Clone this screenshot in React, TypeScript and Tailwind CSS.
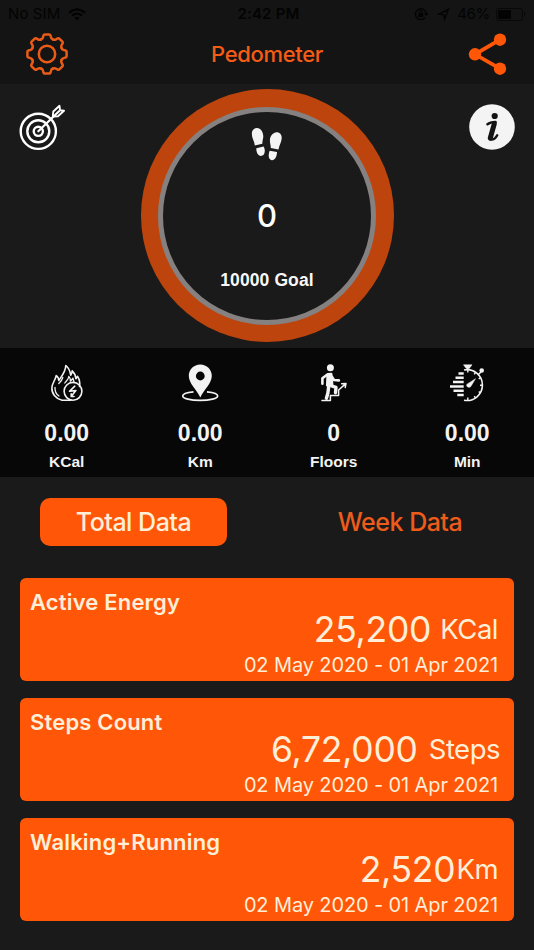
const stats = [
  { label: "KCal", value: "0.00", Icon: FlameIcon },
  { label: "Km", value: "0.00", Icon: PinIcon },
  { label: "Floors", value: "0", Icon: StairsIcon },
  { label: "Min", value: "0.00", Icon: StopwatchIcon },
];

const totals = [
  { title: "Active Energy", value: "25,200", unit: "KCal", valueClass: "pr-[16px] gap-[9px]" },
  { title: "Steps Count", value: "6,72,000", unit: "Steps", valueClass: "pr-[14px] gap-[11px]" },
  { title: "Walking+Running", value: "2,520", unit: "Km", valueClass: "pr-[16px] gap-[1px]" },
];

const range = "02 May 2020 - 01 Apr 2021";

function GearIcon() {
  return (
    <svg width="44" height="44" viewBox="-22 -22 44 44" fill="none" stroke="#ea5b17" strokeWidth="2.5" strokeLinecap="round" strokeLinejoin="round">
      <circle r="8.2" />
      {[0, 45, 90, 135, 180, 225, 270, 315].map((angle) => (
        <path
          key={angle}
          transform={`rotate(${angle})`}
          d="M-6 -14.5C-4.4 -15.1 -4.1 -15.7 -3.9 -17L-3.5 -18.6Q-3.2 -19.6 -2.2 -19.6H2.2Q3.2 -19.6 3.5 -18.6L3.9 -17C4.1 -15.7 4.4 -15.1 6 -14.5"
        />
      ))}
    </svg>
  );
}

function ShareIcon() {
  return (
    <svg width="40" height="44" viewBox="0 0 40 44" fill="#ff5607" stroke="#ff5607">
      <path d="M32 7.7 7 22.3 32 36.7" fill="none" strokeWidth="3.8" />
      <circle cx="7" cy="22.3" r="6.2" stroke="none" />
      <circle cx="32" cy="7.7" r="6.2" stroke="none" />
      <circle cx="32" cy="36.7" r="6.2" stroke="none" />
    </svg>
  );
}

function TargetIcon() {
  return (
    <svg width="48" height="48" viewBox="0 0 48 48" fill="none" stroke="#fff" strokeWidth="2.4" strokeLinejoin="round" strokeLinecap="round">
      <circle cx="19.3" cy="28.3" r="17.6" />
      <circle cx="19.3" cy="28.3" r="11" />
      <circle cx="19.3" cy="28.3" r="4.6" />
      <path d="M19.3 28.3 40 8.2" strokeWidth="2.2" />
      <path d="M33.8 13.5 34.3 8.5 40.5 2.8 41 7.2 45 7.8 39 13.3Z" strokeWidth="1.9" />
    </svg>
  );
}

function InfoIcon() {
  return (
    <svg width="46" height="46" viewBox="0 0 46 46" fill="none" stroke="#141414" strokeLinecap="round" strokeLinejoin="round">
      <circle cx="23" cy="23" r="22.8" fill="#f4f4f4" stroke="none" />
      <circle cx="25.7" cy="12" r="3.1" fill="#141414" stroke="none" />
      <path d="M18.5 20.2C20.5 18.7 22.8 18.2 26.5 18" strokeWidth="2.6" />
      <path d="M25.3 19.8 21.3 34" strokeWidth="5" />
      <path d="M21 35.4C24 36 26.8 34 28.2 31.2" strokeWidth="2.4" />
    </svg>
  );
}

function WifiIcon() {
  return (
    <svg width="18" height="13" viewBox="0 0 18 13" fill="none" stroke="#030303" strokeWidth="2.2">
      <path d="M1 4.6Q9 -2 17 4.6" />
      <path d="M4 7.7Q9 3.6 14 7.7" />
      <path d="M9 12.4 6.4 9.7Q9 7.7 11.6 9.7Z" fill="#030303" stroke="none" />
    </svg>
  );
}

function StatusIcons() {
  return (
    <svg width="40" height="14" viewBox="0 0 40 14" fill="none" stroke="#030303" strokeWidth="1.4">
      <path d="M11 10.6A5.4 5.4 0 1 1 12.2 7" />
      <path d="m10.4 6.5 1.9 2.2 1.9-2.2Z" fill="#030303" strokeWidth="0.5" />
      <rect x="4.4" y="6.2" width="4.8" height="3.8" fill="#030303" stroke="none" />
      <path d="M5.4 6.5V5a1.4 1.4 0 0 1 2.8 0v1.5" strokeWidth="1" />
      <path d="M25 7.2 34.5 2.3 30.5 12 29.9 7.8Z" />
    </svg>
  );
}

function Footprints() {
  return (
    <svg width="32" height="34" viewBox="0 0 32 34" fill="#f4f4f4">
      <path d="M6 1C9.6.9 12.4 5 12.3 9.6 12.2 12 11.4 13.8 11.3 16.7L3.8 18.5C3.5 14.5.8 11.3.8 6.8.8 3.4 3 1.1 6 1Z" />
      <path d="M5.3 21.3 12.7 19.4C14.4 23 14.3 27.5 10.8 28.8 7.5 29.7 5.2 26 5.3 21.3Z" />
      <path d="M26.3 5.2C29.3 5.6 31 8.3 30.7 11.6 30.3 16 27.9 19 27.5 22.6L19.8 21.1C19.9 18.4 18.8 16 18.9 13 19.1 8.6 22.6 4.7 26.3 5.2Z" />
      <path d="M18.7 23.8 26 25.1C26 29.5 23.8 33.4 20.8 33.2 17.3 32.6 17 28 18.7 23.8Z" />
    </svg>
  );
}

function FlameIcon() {
  return (
    <svg width="40" height="40" viewBox="0 0 40 40" fill="none" stroke="#f3f3f3" strokeWidth="1.6" strokeLinecap="round" strokeLinejoin="round">
      <path d="M24 37.3H15C8.5 35.5 4.5 30.5 4.9 24.5 5.2 20.2 8 17.8 9.2 12.6 11 13.8 11.8 15.6 11.8 17.5 14.5 13.5 18.8 8.5 18.8 2.5 21.8 5 23.2 8 23.7 12.2 24.7 11 25.2 9.5 25.2 7.8 28 10.5 28.8 13.2 28.9 15.7L30.6 13.3C33 17.2 33.2 20 32.5 23.5" />
      <path d="M8 24.5C7.8 28.2 9.3 31.3 12 33M11.8 20.5C14 18.5 15.3 16.5 15.8 14.5M17.8 20C19.5 17.5 21.5 16.5 21.8 13.5 23.3 14.8 23.5 16.5 23.4 18.2L26 15.3 27 19" strokeWidth="1.3" />
      <circle cx="26" cy="28.3" r="8.9" />
      <path d="M27.8 23.2 22.5 28.3 28.9 27.6 24.3 33.3M24.2 30.8V33.5H27" />
    </svg>
  );
}

function PinIcon() {
  return (
    <svg width="40" height="40" viewBox="0 0 40 40">
      <path d="M13.5 28.9C7.5 29.5 2.7 31 2.7 33 2.7 35.5 10.5 37.4 20.2 37.4S37.7 35.5 37.7 33C37.7 31 33 29.5 27 28.9" fill="none" stroke="#f3f3f3" strokeWidth="1.6" />
      <path fillRule="evenodd" d="M20.3 1.5C13.8 1.5 8.8 6.5 8.8 12.8 8.8 20.5 16.5 26.5 20.3 34.5 24.1 26.5 31.8 20.5 31.8 12.8 31.8 6.5 26.8 1.5 20.3 1.5ZM20.3 8.6A4.4 4.4 0 1 1 20.3 17.4 4.4 4.4 0 0 1 20.3 8.6Z" fill="#f3f3f3" />
    </svg>
  );
}

function StairsIcon() {
  return (
    <svg width="40" height="40" viewBox="0 0 40 40" fill="none" stroke="#f3f3f3" strokeLinecap="round" strokeLinejoin="round">
      <circle cx="16.4" cy="4.8" r="3.5" fill="#f3f3f3" stroke="none" />
      <path d="M13.7 11.3 17.2 11.1 18.2 22 13.2 22.5Z" fill="#f3f3f3" strokeWidth="2.5" />
      <path d="M12.7 12 8.4 15.2V20.7M17.7 13.5 20 17 24.9 17.4" strokeWidth="2.6" />
      <path d="M14.7 23.5 13.9 30 12.4 35.3M16.2 22.5 22 24.3 21.5 29.7" strokeWidth="3.4" />
      <path d="M8 37.5H16.4V32.4H24.6V27L31.2 21.1M27.7 20.8 32 20.4 31.2 24.5" strokeWidth="1.5" />
    </svg>
  );
}

function StopwatchIcon() {
  return (
    <svg width="40" height="40" viewBox="0 0 40 40" fill="none" stroke="#f3f3f3">
      <path d="M17 7A15.4 15.4 0 1 1 17 37.2" strokeWidth="1.6" />
      <path d="M16.5 1.8H25L22.3 5.5H19.2Z" fill="#f3f3f3" strokeWidth="0.5" />
      <path d="M20.8 5V9.5M20.8 37V34.5M35.5 22.3H33M28.5 9.3 27.3 11.3M33.7 14.7 31.7 15.9M33.7 29.9 31.7 28.7M28.5 35.2 27.3 33.2" strokeWidth="1.4" />
      <circle cx="34.7" cy="7.5" r="2.3" fill="#f3f3f3" stroke="none" />
      <path d="M34 9 30.8 12" strokeWidth="1.5" />
      <path d="M28.5 15.7 23.8 23.5C22 25.5 18.5 23.5 20 21.2Z" fill="#f3f3f3" strokeWidth="0.5" />
      <path d="M11.5 10.5H16.7M8.5 14.8H16.7M6 19.1H16.7M3 23.4H16.7M6.5 27.7H16.7M10.3 32H16.7" strokeWidth="2.5" />
    </svg>
  );
}

export default function App() {
  return (
    <div className="flex h-[950px] w-[534px] flex-col overflow-hidden bg-[#1a1a1a] font-['Inter',sans-serif]">
      <header className="h-[84px] bg-[#141414]">
        <div className="grid h-[28px] grid-cols-3 items-center pr-[9px] pl-[8px] text-[15px] text-[#030303]">
          <div className="flex items-center gap-[8px]">
            <span className="tracking-[0.1px]">No SIM</span>
            <WifiIcon />
          </div>
          <span className="pl-[4px] text-center font-semibold tracking-[0.2px]">2:42 PM</span>
          <div className="flex items-center justify-end whitespace-nowrap">
            <StatusIcons />
            <span className="mr-[6px] ml-[3px] tracking-[-0.3px]">46%</span>
            <div className="flex items-center gap-px">
              <div className="h-[13px] w-[27px] rounded-[3px] border border-[#080808] p-px">
                <div className="h-full w-[13px] rounded-[1px] bg-[#030303]" />
              </div>
              <div className="h-[4px] w-px bg-[#080808]" />
            </div>
          </div>
        </div>
        <div className="flex h-[52px] items-center justify-between pr-[26px] pl-[25px]">
          <GearIcon />
          <h1 className="-ml-[3px] text-[22px] font-medium tracking-[-0.35px] text-[#f75c17]">Pedometer</h1>
          <ShareIcon />
        </div>
      </header>

      <section className="flex h-[264px] justify-between px-[19px] pt-[5px]">
        <div className="w-[48px] pt-[14px]">
          <TargetIcon />
        </div>
        <div className="flex size-[253px] rounded-full bg-[#bd450d] p-[17.5px]">
          <div className="flex size-full flex-col items-center rounded-full border-[5px] border-[#858180] bg-[#1a1a1a] pt-[15px]">
            <Footprints />
            <span className="mt-[37px] text-[31px] leading-[36px] font-medium text-white">0</span>
            <span className="mt-[36px] font-['Liberation_Sans',sans-serif] text-[17.5px] leading-[20px] font-bold tracking-[0.1px] text-[#f7f7f7]">
              10000 Goal
            </span>
          </div>
        </div>
        <div className="flex w-[48px] justify-end pt-[15px]">
          <InfoIcon />
        </div>
      </section>

      <section className="grid h-[129px] grid-cols-4 bg-[#070707] pt-[15px] font-['Liberation_Sans',sans-serif] font-bold text-[#f3f3f3]">
        {stats.map(({ label, value, Icon }) => (
          <div key={label} className="flex flex-col items-center">
            <Icon />
            <span className="mt-[17px] text-[23px] leading-[26px]">{value}</span>
            <span className="mt-[7px] text-[15.5px] leading-[18px]">{label}</span>
          </div>
        ))}
      </section>

      <nav className="mt-[21px] flex gap-[40px] pl-[40px] text-[25px] font-medium tracking-[-0.5px]">
        <button className="h-[48px] w-[187px] rounded-[10px] bg-[#ff5607] pt-[2px] text-[#ffeed8]">Total Data</button>
        <button className="h-[48px] w-[266px] pt-[2px] text-[#ee5c1c]">Week Data</button>
      </nav>

      <main className="mt-[32px] flex flex-col gap-[17px] px-[20px] text-[#ffeed8]">
        {totals.map((item) => (
          <article key={item.title} className="h-[103px] w-[494px] rounded-[6px] bg-[#ff5607]">
            <h2 className="pt-[10px] pl-[10px] text-[22px] leading-[28px] font-semibold tracking-[0.17px]">{item.title}</h2>
            <div className={`-mt-[4px] flex h-[34px] items-center justify-end leading-[34px] ${item.valueClass}`}>
              <span className="pt-[2px] text-[35.5px] tracking-[-0.25px]">{item.value}</span>
              <span className="text-[27.5px] tracking-[-0.5px]">{item.unit}</span>
            </div>
            <p className="mt-[5px] pr-[16px] text-right text-[20px] leading-[28px] tracking-[-0.12px]">{range}</p>
          </article>
        ))}
      </main>
    </div>
  );
}
